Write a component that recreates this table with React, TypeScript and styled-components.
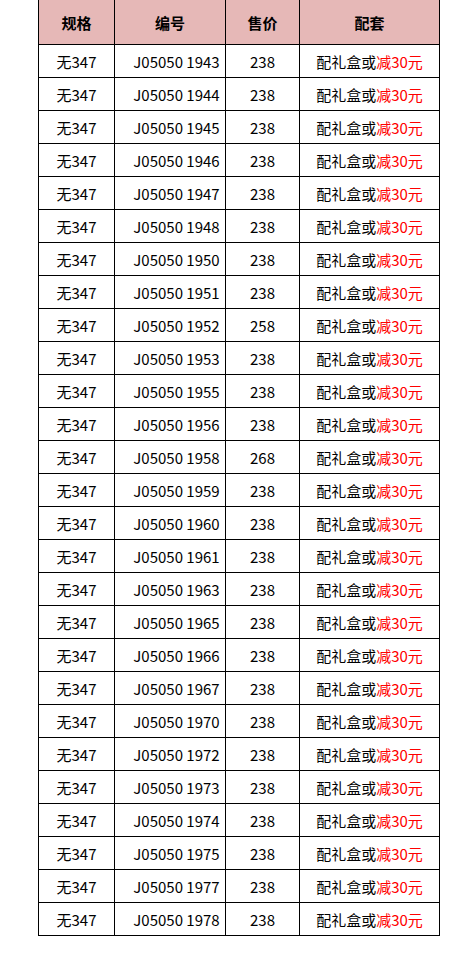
import styled, { createGlobalStyle } from "styled-components";

type Row = {
    code: string;
    price: number;
}

const GlobalStyle = createGlobalStyle`
    html, body {
        margin: 0;
        padding: 0;
        background: #fff;
    }
    body {
        font-family: "Noto Sans CJK SC", "Noto Sans", sans-serif;
        color: #000;
    }
`

const Page = styled.div`
    padding: 0 0 0 38px;
`

const Table = styled.table`
    border-collapse: collapse;
    table-layout: fixed;
    width: 401px;
    margin-top: -1px;
    font-size: 15px;
`

const HeadCell = styled.th<{ w: number }>`
    width: ${(props) => props.w}px;
    height: 45px;
    padding: 0;
    background: #e6b8b7;
    border: 1px solid #000;
    font-weight: 700;
    text-align: center;
    vertical-align: middle;
    box-sizing: border-box;
`

const Cell = styled.td<{ shift?: number }>`
    height: 32px;
    padding: 0 0 0 ${(props) => props.shift ?? 0}px;
    border: 1px solid #000;
    text-align: center;
    vertical-align: middle;
    white-space: nowrap;
    line-height: 1;
`

const Red = styled.span`
    color: #ff0000;
`

const rows: Row[] = [
    { code: "1943", price: 238 },
    { code: "1944", price: 238 },
    { code: "1945", price: 238 },
    { code: "1946", price: 238 },
    { code: "1947", price: 238 },
    { code: "1948", price: 238 },
    { code: "1950", price: 238 },
    { code: "1951", price: 238 },
    { code: "1952", price: 258 },
    { code: "1953", price: 238 },
    { code: "1955", price: 238 },
    { code: "1956", price: 238 },
    { code: "1958", price: 268 },
    { code: "1959", price: 238 },
    { code: "1960", price: 238 },
    { code: "1961", price: 238 },
    { code: "1963", price: 238 },
    { code: "1965", price: 238 },
    { code: "1966", price: 238 },
    { code: "1967", price: 238 },
    { code: "1970", price: 238 },
    { code: "1972", price: 238 },
    { code: "1973", price: 238 },
    { code: "1974", price: 238 },
    { code: "1975", price: 238 },
    { code: "1977", price: 238 },
    { code: "1978", price: 238 },
]

const App = () => {
    return (
        <Page>
            <GlobalStyle />
            <Table>
                <thead>
                    <tr>
                        <HeadCell w={76}>规格</HeadCell>
                        <HeadCell w={111}>编号</HeadCell>
                        <HeadCell w={74}>售价</HeadCell>
                        <HeadCell w={140}>配套</HeadCell>
                    </tr>
                </thead>
                <tbody>
                    {rows.map((row) => (
                        <tr key={row.code}>
                            <Cell>无347</Cell>
                            <Cell shift={13}>J05050 {row.code}</Cell>
                            <Cell>{row.price}</Cell>
                            <Cell>
                                配礼盒或<Red>减30元</Red>
                            </Cell>
                        </tr>
                    ))}
                </tbody>
            </Table>
        </Page>
    )
}

export default App;
